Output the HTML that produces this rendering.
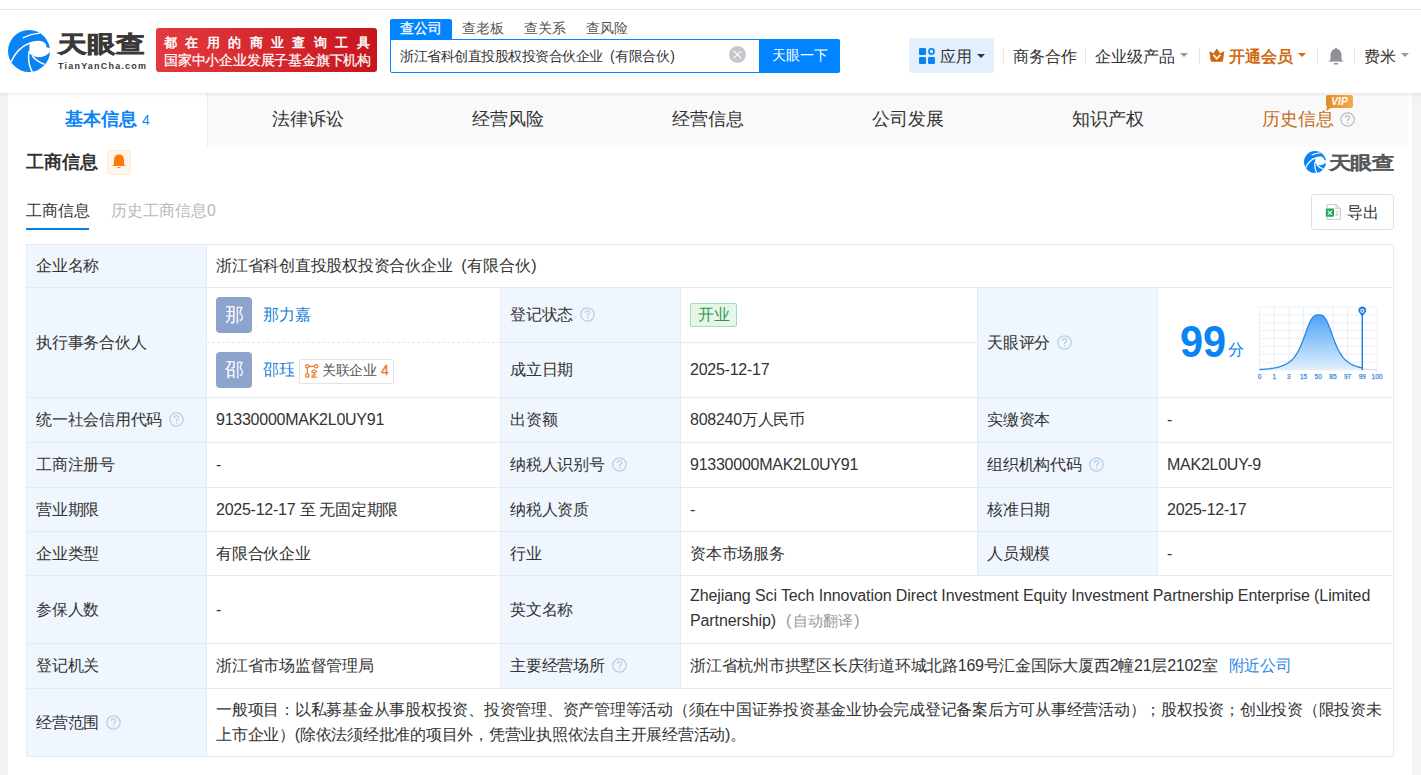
<!DOCTYPE html>
<html><head><meta charset="utf-8">
<style>
*{margin:0;padding:0;box-sizing:border-box}
html,body{width:1421px;height:775px;overflow:hidden;background:#f4f4f4;font-family:"Liberation Sans",sans-serif;color:#333;text-spacing-trim:space-all;text-autospace:no-autospace}
div,span{position:absolute;white-space:nowrap}
span.i{position:static}
#hdr{left:0;top:0;width:1421px;height:93px;background:#fff}
#topline{left:0;top:9px;width:1421px;height:1px;background:#e8e8e8}
#card{left:8px;top:93px;width:1404px;height:682px;background:#fff;box-shadow:0 0 2px rgba(0,0,0,0.05)}
.tab{top:0;height:54px;line-height:53px;font-size:18px;color:#333;text-align:center;width:200px}
.q{display:inline-block;position:static;width:15px;height:15px;vertical-align:top;margin-top:2px;margin-left:2px}
.hl{height:1px;background:#e4ebf2}
.vl{width:1px;background:#e4ebf2}
.lb{background:#eff6fd}
.t{font-size:16px;letter-spacing:-0.25px;color:#333;line-height:20px}
.sep{width:1px;height:14px;top:49px;background:#e3e3e3}
.nav{font-size:15.75px;color:#333;top:46.5px;line-height:20px}
.caret{width:0;height:0;border-left:4px solid transparent;border-right:4px solid transparent;border-top:4px solid #999}
</style></head><body>
<div id="hdr"></div>
<div id="topline"></div>
<!-- logo -->
<svg style="position:absolute;left:8px;top:30px" width="42" height="42" viewBox="0 0 42 42">
  <circle cx="21" cy="21" r="21" fill="#0a84f5"/>
  <path d="M21.8 12.5 C25 11 31 10 34.7 11.4 C37 12.3 38.6 14.5 38.6 17.3 L43 18.5 L43 20.5 C41 24.5 36 27.2 31 27.2 C27 27.2 23.5 25.8 21.6 23.6 C21.2 20 21.2 16 21.8 12.5 Z" fill="#fff"/>
  <path d="M14.7 7.8 Q23 3.8 31.8 3.2" stroke="#fff" stroke-width="1.3" fill="none"/>
  <path d="M21.8 13 C14 16 7 23 3.1 31.8" stroke="#fff" stroke-width="1.5" fill="none"/>
  <path d="M21.3 21 C19.8 28 20.5 35 24.4 42" stroke="#fff" stroke-width="1.5" fill="none"/>
  <path d="M24.4 26.3 C28 30 32 33 36.6 34.2" stroke="#fff" stroke-width="1.5" fill="none"/>
</svg>
<div style="left:58px;top:26px;font-size:29px;font-weight:bold;-webkit-text-stroke:0.9px #3b3838;color:#3b3838;letter-spacing:0px;line-height:36px;transform:scaleY(0.8);transform-origin:0 50%">天眼查</div>
<div style="left:58px;top:60px;font-size:9px;font-weight:bold;color:#3b3838;letter-spacing:1.2px;line-height:12px">TianYanCha.com</div>
<!-- banner -->
<div style="left:156px;top:28px;width:221px;height:44px;border-radius:3px;background:linear-gradient(90deg,#e23a40,#c8161d)"></div>
<div style="left:164px;top:34px;font-size:13px;color:#fff;letter-spacing:8.4px;line-height:17px;-webkit-text-stroke:0.5px #fff">都在用的商业查询工具</div>
<div style="left:164px;top:52px;font-size:14px;letter-spacing:-0.2px;color:#fff;line-height:17px;-webkit-text-stroke:0.2px #fff">国家中小企业发展子基金旗下机构</div>
<!-- search -->
<div style="left:390px;top:19px;width:62px;height:21px;background:#0084ff;border-radius:2px 2px 0 0"></div>
<div style="left:400px;top:19px;font-size:14px;color:#fff;line-height:19px;-webkit-text-stroke:0.3px #fff">查公司</div>
<div style="left:462px;top:19px;font-size:14px;color:#555;line-height:19px">查老板</div>
<div style="left:524px;top:19px;font-size:14px;color:#555;line-height:19px">查关系</div>
<div style="left:586px;top:19px;font-size:14px;color:#555;line-height:19px">查风险</div>
<div style="left:390px;top:39px;width:372px;height:34px;border:1px solid #0084ff;border-radius:0 0 0 2px;background:#fff"></div>
<div style="left:400px;top:46px;font-size:14px;letter-spacing:-0.5px;color:#333;line-height:20px">浙江省科创直投股权投资合伙企业<span class="i" style="margin-left:7.5px;margin-right:1px">(</span>有限合伙<span class="i" style="margin-left:1px">)</span></div>
<div style="left:729px;top:46px;width:17px;height:17px;border-radius:50%;background:#c5c7cc"></div>
<svg style="position:absolute;left:729px;top:46px" width="17" height="17"><path d="M4.8 4.8L12.2 12.2M12.2 4.8L4.8 12.2" stroke="#fff" stroke-width="1.1"/></svg>
<div style="left:759px;top:39px;width:81px;height:34px;background:#0084ff;border-radius:0 2px 2px 0"></div>
<div style="left:772px;top:45px;font-size:14px;color:#fff;line-height:20px">天眼一下</div>
<!-- nav -->
<div style="left:909px;top:38px;width:85px;height:35px;background:#e2effc;border-radius:3px"></div>
<svg style="position:absolute;left:919px;top:48px" width="16" height="16" viewBox="0 0 16 16">
  <rect x="0" y="0" width="7" height="7" rx="1.2" fill="#0a84f5"/>
  <rect x="0" y="9" width="7" height="7" rx="1.2" fill="#0a84f5"/>
  <rect x="9" y="9" width="7" height="7" rx="1.2" fill="#0a84f5"/>
  <circle cx="12.5" cy="3.5" r="2.6" stroke="#0a84f5" stroke-width="1.6" fill="none"/>
</svg>
<div class="nav" style="left:940px">应用</div>
<div class="caret" style="left:977px;top:54px;border-top-color:#333"></div>
<div class="sep" style="left:1003px"></div>
<div class="nav" style="left:1013px">商务合作</div>
<div class="sep" style="left:1085px"></div>
<div class="nav" style="left:1095px">企业级产品</div>
<div class="caret" style="left:1180px;top:53px;border-top-color:#999"></div>
<div class="sep" style="left:1199px"></div>
<svg style="position:absolute;left:1209px;top:48px" width="16" height="14" viewBox="0 0 16 14">
  <path d="M0.3 3.2 L4.5 5.2 L7.8 0.5 L11.1 5.2 L15.4 3.2 L14 12.5 Q13.7 13.7 12.5 13.7 L3 13.7 Q1.8 13.7 1.6 12.5 Z" fill="#d2670f"/>
  <path d="M4.3 6.8 L7.8 10.6 L11.3 6.8" stroke="#fff2dc" stroke-width="1.8" fill="none"/>
</svg>
<div class="nav" style="left:1229px;color:#d06b14;font-weight:bold">开通会员</div>
<div class="caret" style="left:1298px;top:53px;border-top-color:#d06b14"></div>
<div class="sep" style="left:1317px"></div>
<svg style="position:absolute;left:1328px;top:47px" width="16" height="18" viewBox="0 0 16 18">
  <path d="M8 0.5 C9 0.5 9 1.5 9 2 C12 2.8 13.5 5 13.5 8 L13.5 12.5 L15.5 14.5 L0.5 14.5 L2.5 12.5 L2.5 8 C2.5 5 4 2.8 7 2 C7 1.5 7 0.5 8 0.5Z" fill="#8e9095"/>
  <rect x="6" y="16" width="4" height="1.5" fill="#8e9095"/>
</svg>
<div class="sep" style="left:1354px"></div>
<div class="nav" style="left:1364px">费米</div>
<div class="caret" style="left:1401px;top:53px;border-top-color:#999"></div>

<div id="card"></div>
<!-- tabs -->
<div style="left:8px;top:93px;width:1401px;height:54px;background:#f9f9f9">
  <div class="tab" style="left:0;width:199px;background:#fff;color:#0a84f5;font-weight:bold">基本信息<span class="i" style="font-size:14px;font-weight:normal;margin-left:5px">4</span></div>
  <div style="left:199px;top:0;width:1px;height:54px;background:#efefef"></div>
  <div class="tab" style="left:200px">法律诉讼</div>
  <div class="tab" style="left:400px">经营风险</div>
  <div class="tab" style="left:600px">经营信息</div>
  <div class="tab" style="left:800px">公司发展</div>
  <div class="tab" style="left:1000px">知识产权</div>
  <div class="tab" style="left:1200px;color:#c56d22">历史信息<span class="i" style="display:inline-block;width:15px;height:15px;margin-left:6px;vertical-align:-2px;color:#b8bfc8"><svg width="15" height="15" viewBox="0 0 15 15"><circle cx="7.5" cy="7.5" r="6.7" stroke="currentColor" stroke-width="1.3" fill="none"/><path d="M5.4 5.9C5.4 4.5 6.3 3.7 7.5 3.7C8.8 3.7 9.6 4.5 9.6 5.6C9.6 6.9 7.6 7.2 7.6 8.8V9.3" stroke="currentColor" stroke-width="1.2" fill="none"/><circle cx="7.6" cy="11.1" r="0.8" fill="currentColor"/></svg></span></div>
</div>
<div style="left:0;top:93px;width:1421px;height:5px;background:linear-gradient(rgba(0,0,0,0.065),rgba(0,0,0,0.03) 40%,rgba(0,0,0,0))"></div>
<svg style="position:absolute;left:1325px;top:94px" width="29" height="17" viewBox="0 0 29 17"><defs><linearGradient id="vg" x1="0" y1="0" x2="1" y2="0"><stop offset="0" stop-color="#e38a22"/><stop offset="1" stop-color="#f1ad4f"/></linearGradient></defs><path d="M3 1H25.5Q28 1 28 3.5V11.5Q28 14 25.5 14H6L1.2 17L2 12.5Q1 12 1 10.5V3Q1 1 3 1Z" fill="url(#vg)"/><text x="14.5" y="11.3" text-anchor="middle" font-family="Liberation Sans" font-weight="bold" font-style="italic" font-size="10" fill="#fff" letter-spacing="0.2">VIP</text></svg>
<!-- section title -->
<div style="left:26px;top:150px;font-size:18px;font-weight:bold;color:#333;line-height:24px">工商信息</div>
<div style="left:107px;top:150px;width:24px;height:25px;background:#fff4ea;border:1px solid #fde9d8;border-radius:3px"></div>
<svg style="position:absolute;left:112px;top:154px" width="14" height="15" viewBox="0 0 14 15">
  <path d="M7 0.5 C10.5 0.5 12 3 12 6 L12 10.5 L13.5 12 L0.5 12 L2 10.5 L2 6 C2 3 3.5 0.5 7 0.5Z" fill="#ff7a00"/>
  <path d="M5 13 Q7 15 9 13Z" fill="#ff7a00"/>
</svg>
<!-- small logo right -->
<svg style="position:absolute;left:1304px;top:151px" width="22" height="22" viewBox="0 0 42 42">
  <circle cx="21" cy="21" r="21" fill="#0a84f5"/>
  <path d="M21.8 12.5 C25 11 31 10 34.7 11.4 C37 12.3 38.6 14.5 38.6 17.3 L43 18.5 L43 20.5 C41 24.5 36 27.2 31 27.2 C27 27.2 23.5 25.8 21.6 23.6 C21.2 20 21.2 16 21.8 12.5 Z" fill="#fff"/>
  <path d="M14.7 7.8 Q23 3.8 31.8 3.2" stroke="#fff" stroke-width="2" fill="none"/>
  <path d="M21.8 13 C14 16 7 23 3.1 31.8" stroke="#fff" stroke-width="2.4" fill="none"/>
  <path d="M21.3 21 C19.8 28 20.5 35 24.4 42" stroke="#fff" stroke-width="2.4" fill="none"/>
  <path d="M24.4 26.3 C28 30 32 33 36.6 34.2" stroke="#fff" stroke-width="2.4" fill="none"/>
</svg>
<div style="left:1329px;top:148.5px;font-size:22px;letter-spacing:-0.7px;font-weight:bold;color:#58595b;line-height:28px;-webkit-text-stroke:0.2px #58595b;transform:scaleY(0.8);transform-origin:0 50%">天眼查</div>
<!-- subtabs -->
<div style="left:26px;top:201px;font-size:15.75px;color:#333;line-height:20px">工商信息</div>
<div style="left:26px;top:228px;width:63px;height:2px;background:#0a7ee8"></div>
<div style="left:111px;top:201px;font-size:15.75px;color:#b5b9c2;line-height:20px">历史工商信息0</div>
<!-- export -->
<div style="left:1311px;top:194px;width:83px;height:36px;border:1px solid #dde1e7;border-radius:3px;background:#fff"></div>
<svg style="position:absolute;left:1325px;top:204px" width="17" height="17" viewBox="0 0 17 17">
  <path d="M2.2 0.5 H11 L15.4 4.7 V15.5 H2.2 Z" fill="#fff" stroke="#c9ccd1" stroke-width="1.1"/>
  <path d="M11 0.8 V4.7 H15" fill="#e4e6ea" stroke="#c9ccd1" stroke-width="0.8"/>
  <rect x="0.8" y="4.6" width="8.2" height="8.2" rx="1.2" fill="#27a35b"/>
  <path d="M2.8 6.6 L7 10.8 M7 6.6 L2.8 10.8" stroke="#c8ffe0" stroke-width="1.3"/>
  <rect x="10.5" y="7.2" width="3" height="1.2" fill="#ccc"/><rect x="10.5" y="9.6" width="3" height="2.4" fill="#d8d8d8"/>
</svg>
<div style="left:1347px;top:203px;font-size:15.75px;color:#333;line-height:20px">导出</div>
<!--TBL-->
<div class="lb" style="left:26px;top:244px;width:180px;height:512px"></div>
<div class="lb" style="left:500px;top:287px;width:180px;height:401px"></div>
<div class="lb" style="left:977px;top:287px;width:180px;height:288px"></div>
<div class="hl" style="left:26px;top:244px;width:1368px;height:1px"></div>
<div class="hl" style="left:26px;top:287px;width:1368px;height:1px"></div>
<div class="hl" style="left:26px;top:397px;width:1368px;height:1px"></div>
<div class="hl" style="left:26px;top:442px;width:1368px;height:1px"></div>
<div class="hl" style="left:26px;top:487px;width:1368px;height:1px"></div>
<div class="hl" style="left:26px;top:531px;width:1368px;height:1px"></div>
<div class="hl" style="left:26px;top:575px;width:1368px;height:1px"></div>
<div class="hl" style="left:26px;top:643px;width:1368px;height:1px"></div>
<div class="hl" style="left:26px;top:688px;width:1368px;height:1px"></div>
<div class="hl" style="left:26px;top:756px;width:1368px;height:1px"></div>
<div style="left:207px;top:342px;width:293px;height:1px;border-top:1px dashed #e3e8ee"></div>
<div class="hl" style="left:500px;top:342px;width:477px;height:1px"></div>
<div class="vl" style="left:26px;top:244px;width:1px;height:513px"></div>
<div class="vl" style="left:206px;top:244px;width:1px;height:513px"></div>
<div class="vl" style="left:1393px;top:244px;width:1px;height:513px"></div>
<div class="vl" style="left:500px;top:287px;width:1px;height:401px"></div>
<div class="vl" style="left:680px;top:287px;width:1px;height:401px"></div>
<div class="vl" style="left:977px;top:287px;width:1px;height:288px"></div>
<div class="vl" style="left:1157px;top:287px;width:1px;height:288px"></div>
<div class="t" style="left:36px;top:256.0px;">企业名称</div>
<div class="t" style="left:216px;top:256.0px;">浙江省科创直投股权投资合伙企业<span class="i" style="margin-left:9px;margin-right:1px">(</span>有限合伙<span class="i" style="margin-left:1px">)</span></div>
<div class="t" style="left:36px;top:332.5px;">执行事务合伙人</div>
<div class="t" style="left:510px;top:305.0px;">登记状态<span class="q" style="color:#b9cfe7;margin-left:7px"><svg width="15" height="15" viewBox="0 0 15 15"><circle cx="7.5" cy="7.5" r="6.7" stroke="currentColor" stroke-width="1.3" fill="none"/><path d="M5.4 5.9C5.4 4.5 6.3 3.7 7.5 3.7C8.8 3.7 9.6 4.5 9.6 5.6C9.6 6.9 7.6 7.2 7.6 8.8V9.3" stroke="currentColor" stroke-width="1.2" fill="none"/><circle cx="7.6" cy="11.1" r="0.8" fill="currentColor"/></svg></span></div>
<div class="t" style="left:510px;top:360.0px;">成立日期</div>
<div class="t" style="left:690px;top:360.0px;">2025-12-17</div>
<div class="t" style="left:987px;top:332.5px;">天眼评分<span class="q" style="color:#b9cfe7;margin-left:7px"><svg width="15" height="15" viewBox="0 0 15 15"><circle cx="7.5" cy="7.5" r="6.7" stroke="currentColor" stroke-width="1.3" fill="none"/><path d="M5.4 5.9C5.4 4.5 6.3 3.7 7.5 3.7C8.8 3.7 9.6 4.5 9.6 5.6C9.6 6.9 7.6 7.2 7.6 8.8V9.3" stroke="currentColor" stroke-width="1.2" fill="none"/><circle cx="7.6" cy="11.1" r="0.8" fill="currentColor"/></svg></span></div>
<div class="t" style="left:36px;top:410.0px;">统一社会信用代码<span class="q" style="color:#b9cfe7;margin-left:7px"><svg width="15" height="15" viewBox="0 0 15 15"><circle cx="7.5" cy="7.5" r="6.7" stroke="currentColor" stroke-width="1.3" fill="none"/><path d="M5.4 5.9C5.4 4.5 6.3 3.7 7.5 3.7C8.8 3.7 9.6 4.5 9.6 5.6C9.6 6.9 7.6 7.2 7.6 8.8V9.3" stroke="currentColor" stroke-width="1.2" fill="none"/><circle cx="7.6" cy="11.1" r="0.8" fill="currentColor"/></svg></span></div>
<div class="t" style="left:216px;top:410.0px;">91330000MAK2L0UY91</div>
<div class="t" style="left:510px;top:410.0px;">出资额</div>
<div class="t" style="left:690px;top:410.0px;">808240万人民币</div>
<div class="t" style="left:987px;top:410.0px;">实缴资本</div>
<div class="t" style="left:1167px;top:410.0px;">-</div>
<div class="t" style="left:36px;top:455.0px;">工商注册号</div>
<div class="t" style="left:216px;top:455.0px;">-</div>
<div class="t" style="left:510px;top:455.0px;">纳税人识别号<span class="q" style="color:#b9cfe7;margin-left:7px"><svg width="15" height="15" viewBox="0 0 15 15"><circle cx="7.5" cy="7.5" r="6.7" stroke="currentColor" stroke-width="1.3" fill="none"/><path d="M5.4 5.9C5.4 4.5 6.3 3.7 7.5 3.7C8.8 3.7 9.6 4.5 9.6 5.6C9.6 6.9 7.6 7.2 7.6 8.8V9.3" stroke="currentColor" stroke-width="1.2" fill="none"/><circle cx="7.6" cy="11.1" r="0.8" fill="currentColor"/></svg></span></div>
<div class="t" style="left:690px;top:455.0px;">91330000MAK2L0UY91</div>
<div class="t" style="left:987px;top:455.0px;">组织机构代码<span class="q" style="color:#b9cfe7;margin-left:7px"><svg width="15" height="15" viewBox="0 0 15 15"><circle cx="7.5" cy="7.5" r="6.7" stroke="currentColor" stroke-width="1.3" fill="none"/><path d="M5.4 5.9C5.4 4.5 6.3 3.7 7.5 3.7C8.8 3.7 9.6 4.5 9.6 5.6C9.6 6.9 7.6 7.2 7.6 8.8V9.3" stroke="currentColor" stroke-width="1.2" fill="none"/><circle cx="7.6" cy="11.1" r="0.8" fill="currentColor"/></svg></span></div>
<div class="t" style="left:1167px;top:455.0px;">MAK2L0UY-9</div>
<div class="t" style="left:36px;top:499.5px;">营业期限</div>
<div class="t" style="left:216px;top:499.5px;">2025-12-17 至 无固定期限</div>
<div class="t" style="left:510px;top:499.5px;">纳税人资质</div>
<div class="t" style="left:690px;top:499.5px;">-</div>
<div class="t" style="left:987px;top:499.5px;">核准日期</div>
<div class="t" style="left:1167px;top:499.5px;">2025-12-17</div>
<div class="t" style="left:36px;top:543.5px;">企业类型</div>
<div class="t" style="left:216px;top:543.5px;">有限合伙企业</div>
<div class="t" style="left:510px;top:543.5px;">行业</div>
<div class="t" style="left:690px;top:543.5px;">资本市场服务</div>
<div class="t" style="left:987px;top:543.5px;">人员规模</div>
<div class="t" style="left:1167px;top:543.5px;">-</div>
<div class="t" style="left:36px;top:599.5px;">参保人数</div>
<div class="t" style="left:216px;top:599.5px;">-</div>
<div class="t" style="left:510px;top:599.5px;">英文名称</div>
<div class="t" style="left:36px;top:656.0px;">登记机关</div>
<div class="t" style="left:216px;top:656.0px;">浙江省市场监督管理局</div>
<div class="t" style="left:510px;top:656.0px;">主要经营场所<span class="q" style="color:#b9cfe7;margin-left:7px"><svg width="15" height="15" viewBox="0 0 15 15"><circle cx="7.5" cy="7.5" r="6.7" stroke="currentColor" stroke-width="1.3" fill="none"/><path d="M5.4 5.9C5.4 4.5 6.3 3.7 7.5 3.7C8.8 3.7 9.6 4.5 9.6 5.6C9.6 6.9 7.6 7.2 7.6 8.8V9.3" stroke="currentColor" stroke-width="1.2" fill="none"/><circle cx="7.6" cy="11.1" r="0.8" fill="currentColor"/></svg></span></div>
<div class="t" style="left:690px;top:656.0px;">浙江省杭州市拱墅区长庆街道环城北路169号汇金国际大厦西2幢21层2102室 <span class="i" style="color:#2f8ae5;margin-left:7px">附近公司</span></div>
<div class="t" style="left:36px;top:712.5px;">经营范围<span class="q" style="color:#b9cfe7;margin-left:7px"><svg width="15" height="15" viewBox="0 0 15 15"><circle cx="7.5" cy="7.5" r="6.7" stroke="currentColor" stroke-width="1.3" fill="none"/><path d="M5.4 5.9C5.4 4.5 6.3 3.7 7.5 3.7C8.8 3.7 9.6 4.5 9.6 5.6C9.6 6.9 7.6 7.2 7.6 8.8V9.3" stroke="currentColor" stroke-width="1.2" fill="none"/><circle cx="7.6" cy="11.1" r="0.8" fill="currentColor"/></svg></span></div>
<div class="t" style="left:690px;top:583px;width:700px;white-space:normal;line-height:25px;letter-spacing:-0.1px">Zhejiang Sci Tech Innovation Direct Investment Equity Investment Partnership Enterprise (Limited Partnership)<span class="i" style="color:#999;margin-left:10px">(<span class="i" style="font-size:15px;margin-left:2px;letter-spacing:0">自动翻译</span><span class="i" style="margin-left:1px">)</span></span></div>
<div class="t" style="left:216px;top:697px;width:1172px;white-space:normal;line-height:25px">一般项目：以私募基金从事股权投资、投资管理、资产管理等活动（须在中国证券投资基金业协会完成登记备案后方可从事经营活动）；股权投资；创业投资（限投资未上市企业）(除依法须经批准的项目外，凭营业执照依法自主开展经营活动)。</div>
<div style="left:216px;top:297px;width:36px;height:36px;border-radius:4px;background:#8ba3cd;color:#fff;font-size:19px;line-height:36px;text-align:center">那</div>
<div class="t" style="left:263px;top:305px;color:#1a7fd6">那力嘉</div>
<div style="left:216px;top:352px;width:36px;height:36px;border-radius:4px;background:#8ba3cd;color:#fff;font-size:19px;line-height:36px;text-align:center">邵</div>
<div class="t" style="left:263px;top:360px;color:#1a7fd6">邵珏</div>
<div style="left:299px;top:359px;width:95px;height:25px;border:1px solid #e4e4e4;border-radius:2px;background:#fff"></div>
<svg style="position:absolute;left:305px;top:364px" width="14" height="14" viewBox="0 0 14 14">
<circle cx="2.3" cy="2.3" r="1.7" stroke="#e8792b" stroke-width="1.2" fill="none"/>
<circle cx="11.3" cy="2.3" r="1.7" stroke="#e8792b" stroke-width="1.2" fill="none"/>
<circle cx="2.3" cy="11.6" r="1.7" stroke="#e8792b" stroke-width="1.2" fill="none"/>
<path d="M4 2.3 L9.6 2.3 M2.3 4 L2.3 9.9" stroke="#e8792b" stroke-width="1.2"/>
<path d="M6 8.3 L9 5.6 L12.3 8.3 M7.3 8.6 L10.8 8.6 M9 8.6 L9 13.2 M6.3 13.3 L12.2 13.3 M9 10.8 L11 10.8 M7.2 10.5 L7.2 13" stroke="#e8792b" stroke-width="1.1" fill="none"/>
</svg>
<div style="left:322px;top:360px;font-size:14px;letter-spacing:-0.4px;color:#555;line-height:20px">关联企业</div>
<div style="left:381px;top:360px;font-size:14px;color:#e8792b;line-height:20px;-webkit-text-stroke:0.3px #e8792b">4</div>
<div style="left:690px;top:303px;width:47px;height:24px;border:1px solid #a8dcb5;border-radius:2px;background:#e6f7ea;color:#2f9a4f;font-size:16px;line-height:22px;text-align:center">开业</div>
<div style="left:1180px;top:319px;font-size:45px;font-weight:bold;color:#0a84f5;line-height:46px;transform:scaleX(0.92);transform-origin:0 0">99</div>
<div style="left:1228px;top:340px;font-size:16px;color:#0a84f5;line-height:20px">分</div>
<svg style="position:absolute;left:1255px;top:302px" width="130" height="82" viewBox="1255 302 130 82"><defs><linearGradient id="g" x1="0" y1="0" x2="0" y2="1"><stop offset="0" stop-color="#4aa3f7"/><stop offset="1" stop-color="#e3f0fd"/></linearGradient></defs><line x1="1259.5" y1="307" x2="1259.5" y2="370" stroke="#e9f0f8" stroke-width="1"/><line x1="1274.2" y1="307" x2="1274.2" y2="370" stroke="#e9f0f8" stroke-width="1"/><line x1="1288.9" y1="307" x2="1288.9" y2="370" stroke="#e9f0f8" stroke-width="1"/><line x1="1303.6" y1="307" x2="1303.6" y2="370" stroke="#e9f0f8" stroke-width="1"/><line x1="1318.2" y1="307" x2="1318.2" y2="370" stroke="#e9f0f8" stroke-width="1"/><line x1="1332.9" y1="307" x2="1332.9" y2="370" stroke="#e9f0f8" stroke-width="1"/><line x1="1347.6" y1="307" x2="1347.6" y2="370" stroke="#e9f0f8" stroke-width="1"/><line x1="1362.3" y1="307" x2="1362.3" y2="370" stroke="#e9f0f8" stroke-width="1"/><line x1="1377.0" y1="307" x2="1377.0" y2="370" stroke="#e9f0f8" stroke-width="1"/><line x1="1259.5" y1="307.0" x2="1377" y2="307.0" stroke="#e9f0f8" stroke-width="1"/><line x1="1259.5" y1="314.9" x2="1377" y2="314.9" stroke="#e9f0f8" stroke-width="1"/><line x1="1259.5" y1="322.8" x2="1377" y2="322.8" stroke="#e9f0f8" stroke-width="1"/><line x1="1259.5" y1="330.6" x2="1377" y2="330.6" stroke="#e9f0f8" stroke-width="1"/><line x1="1259.5" y1="338.5" x2="1377" y2="338.5" stroke="#e9f0f8" stroke-width="1"/><line x1="1259.5" y1="346.4" x2="1377" y2="346.4" stroke="#e9f0f8" stroke-width="1"/><line x1="1259.5" y1="354.2" x2="1377" y2="354.2" stroke="#e9f0f8" stroke-width="1"/><line x1="1259.5" y1="362.1" x2="1377" y2="362.1" stroke="#e9f0f8" stroke-width="1"/><line x1="1259.5" y1="370.0" x2="1377" y2="370.0" stroke="#e9f0f8" stroke-width="1"/><path d="M1259.5 369.5 L1260.8 369.5 L1262.1 369.4 L1263.4 369.3 L1264.6 369.2 L1265.9 369.1 L1267.2 369.0 L1268.5 368.8 L1269.8 368.7 L1271.1 368.5 L1272.3 368.3 L1273.6 368.1 L1274.9 367.9 L1276.2 367.6 L1277.5 367.3 L1278.8 367.0 L1280.1 366.6 L1281.3 366.2 L1282.6 365.7 L1283.9 365.2 L1285.2 364.6 L1286.5 363.9 L1287.8 363.2 L1289.1 362.3 L1290.3 361.3 L1291.6 360.2 L1292.9 358.9 L1294.2 357.4 L1295.5 355.7 L1296.8 353.7 L1298.0 351.5 L1299.3 349.0 L1300.6 346.2 L1301.9 343.1 L1303.2 339.8 L1304.5 336.3 L1305.8 332.7 L1307.0 329.1 L1308.3 325.7 L1309.6 322.7 L1310.9 320.1 L1312.2 318.1 L1313.5 316.6 L1314.8 315.7 L1316.0 315.2 L1317.3 315.0 L1318.6 315.0 L1319.9 315.0 L1321.2 315.2 L1322.5 315.7 L1323.8 316.6 L1325.0 318.1 L1326.3 320.1 L1327.6 322.7 L1328.9 325.8 L1330.2 329.2 L1331.5 332.8 L1332.7 336.4 L1334.0 339.9 L1335.3 343.2 L1336.6 346.3 L1337.9 349.0 L1339.2 351.5 L1340.5 353.7 L1341.7 355.7 L1343.0 357.4 L1344.3 358.9 L1345.6 360.2 L1346.9 361.3 L1348.2 362.3 L1349.5 363.2 L1350.7 364.0 L1352.0 364.6 L1353.3 365.2 L1354.6 365.8 L1355.9 366.2 L1357.2 366.6 L1358.4 367.0 L1359.7 367.3 L1361.0 367.6 L1362.3 367.9 L1362.3 370 L1259.5 370Z" fill="url(#g)"/><path d="M1259.5 369.5 L1260.8 369.5 L1262.1 369.4 L1263.4 369.3 L1264.6 369.2 L1265.9 369.1 L1267.2 369.0 L1268.5 368.8 L1269.8 368.7 L1271.1 368.5 L1272.3 368.3 L1273.6 368.1 L1274.9 367.9 L1276.2 367.6 L1277.5 367.3 L1278.8 367.0 L1280.1 366.6 L1281.3 366.2 L1282.6 365.7 L1283.9 365.2 L1285.2 364.6 L1286.5 363.9 L1287.8 363.2 L1289.1 362.3 L1290.3 361.3 L1291.6 360.2 L1292.9 358.9 L1294.2 357.4 L1295.5 355.7 L1296.8 353.7 L1298.0 351.5 L1299.3 349.0 L1300.6 346.2 L1301.9 343.1 L1303.2 339.8 L1304.5 336.3 L1305.8 332.7 L1307.0 329.1 L1308.3 325.7 L1309.6 322.7 L1310.9 320.1 L1312.2 318.1 L1313.5 316.6 L1314.8 315.7 L1316.0 315.2 L1317.3 315.0 L1318.6 315.0 L1319.9 315.0 L1321.2 315.2 L1322.5 315.7 L1323.8 316.6 L1325.0 318.1 L1326.3 320.1 L1327.6 322.7 L1328.9 325.8 L1330.2 329.2 L1331.5 332.8 L1332.7 336.4 L1334.0 339.9 L1335.3 343.2 L1336.6 346.3 L1337.9 349.0 L1339.2 351.5 L1340.5 353.7 L1341.7 355.7 L1343.0 357.4 L1344.3 358.9 L1345.6 360.2 L1346.9 361.3 L1348.2 362.3 L1349.5 363.2 L1350.7 364.0 L1352.0 364.6 L1353.3 365.2 L1354.6 365.8 L1355.9 366.2 L1357.2 366.6 L1358.4 367.0 L1359.7 367.3 L1361.0 367.6 L1362.3 367.9" stroke="#2b87e3" stroke-width="1.3" fill="none"/><line x1="1362.3" y1="369" x2="1377" y2="370" stroke="#d5d9de" stroke-width="1"/><line x1="1362.3" y1="312" x2="1362.3" y2="370" stroke="#1a7fe0" stroke-width="1.4"/><path d="M1362.3 316.5 L1359.2 312.6 A3.8 3.8 0 1 1 1365.4 312.6Z" fill="#1a7fe0"/><circle cx="1362.3" cy="310.8" r="2.1" fill="#fff"/><circle cx="1362.3" cy="310.8" r="1.1" fill="#1a7fe0"/><text x="1259.5" y="379" font-size="6.5" fill="#3d8de0" stroke="#3d8de0" stroke-width="0.25" text-anchor="middle" font-family="Liberation Sans">0</text><text x="1274.2" y="379" font-size="6.5" fill="#3d8de0" stroke="#3d8de0" stroke-width="0.25" text-anchor="middle" font-family="Liberation Sans">1</text><text x="1288.9" y="379" font-size="6.5" fill="#3d8de0" stroke="#3d8de0" stroke-width="0.25" text-anchor="middle" font-family="Liberation Sans">3</text><text x="1303.6" y="379" font-size="6.5" fill="#3d8de0" stroke="#3d8de0" stroke-width="0.25" text-anchor="middle" font-family="Liberation Sans">15</text><text x="1318.2" y="379" font-size="6.5" fill="#3d8de0" stroke="#3d8de0" stroke-width="0.25" text-anchor="middle" font-family="Liberation Sans">50</text><text x="1332.9" y="379" font-size="6.5" fill="#3d8de0" stroke="#3d8de0" stroke-width="0.25" text-anchor="middle" font-family="Liberation Sans">85</text><text x="1347.6" y="379" font-size="6.5" fill="#3d8de0" stroke="#3d8de0" stroke-width="0.25" text-anchor="middle" font-family="Liberation Sans">97</text><text x="1362.3" y="379" font-size="6.5" fill="#3d8de0" stroke="#3d8de0" stroke-width="0.25" text-anchor="middle" font-family="Liberation Sans">99</text><text x="1377.0" y="379" font-size="6.5" fill="#3d8de0" stroke="#3d8de0" stroke-width="0.25" text-anchor="middle" font-family="Liberation Sans">100</text></svg>
<!--/TBL-->
</body></html>
